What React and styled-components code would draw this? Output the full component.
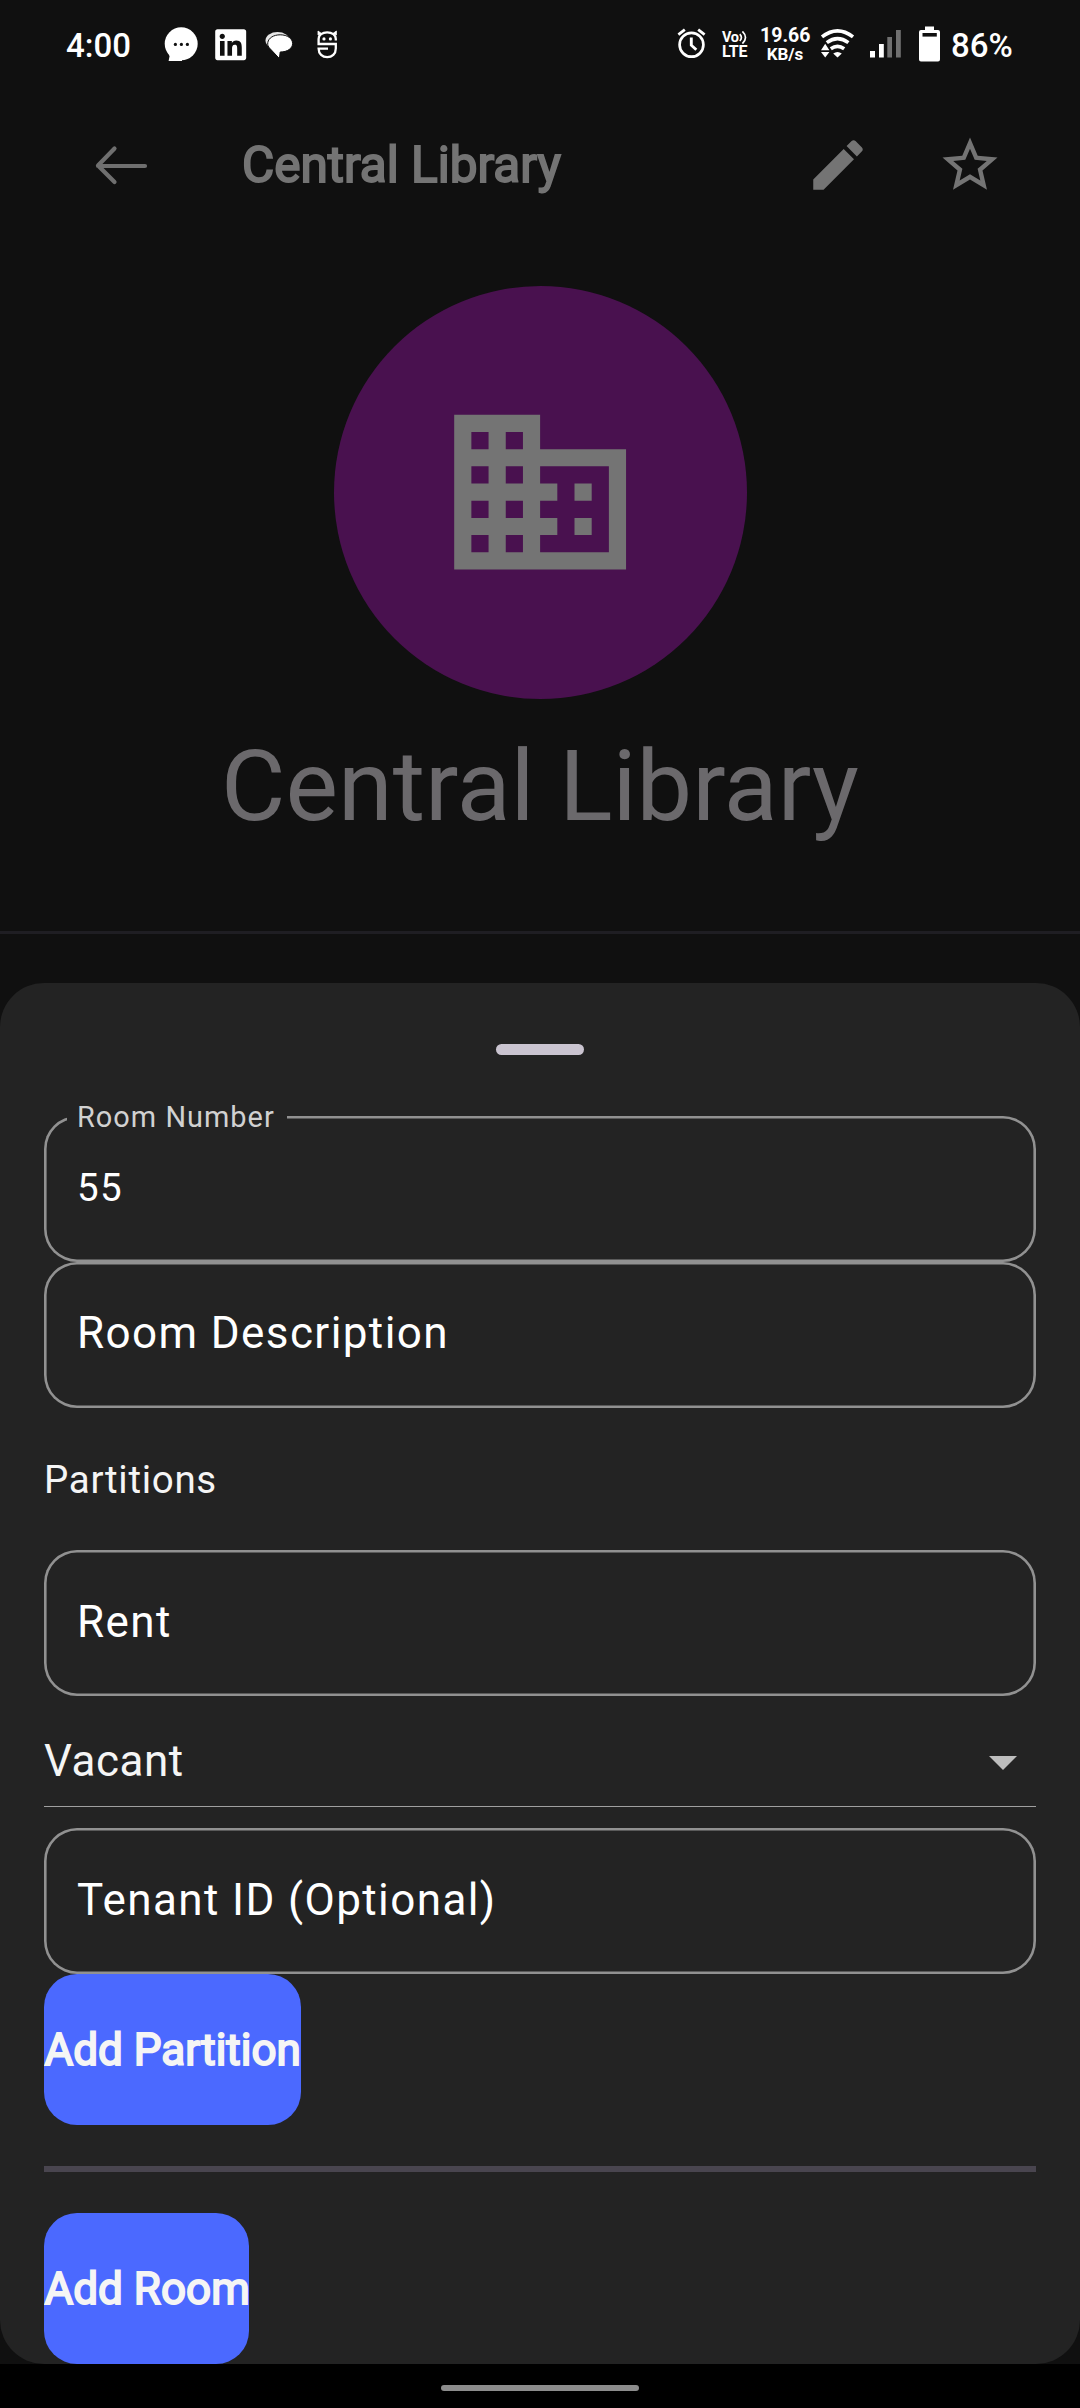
import React from "react";
import styled, { createGlobalStyle, css } from "styled-components";
import { FaLinkedin } from "react-icons/fa";

const GlobalStyle = createGlobalStyle`
  *, *::before, *::after { box-sizing: border-box; }
  html, body { margin: 0; padding: 0; background: #101010; }
  body { font-family: Roboto, "Noto Sans", sans-serif; }
`;

const Screen = styled.div`
  display: flex;
  flex-direction: column;
  width: 1080px;
  height: 2408px;
  background: #101010;
  overflow: hidden;
`;

/* Status bar */

const StatusBar = styled.div`
  display: flex;
  justify-content: space-between;
  align-items: flex-start;
  flex: none;
  height: 88px;
  padding: 26px 66px 0;
  color: #fff;
`;

const StatusGroup = styled.div`
  display: flex;
  align-items: flex-start;
`;

const StatusText = styled.span`
  font-size: 33px;
  font-weight: 500;
  line-height: 39px;
  white-space: nowrap;
  width: ${(p) => p.$width}px;
  margin-left: ${(p) => p.$gap || 0}px;
`;

const StatusIcon = styled.svg`
  display: block;
  flex: none;
  width: ${(p) => p.$width}px;
  height: 36px;
  margin-left: ${(p) => p.$gap || 0}px;
`;

const LinkedInIcon = styled(FaLinkedin)`
  display: block;
  width: 35.4px;
  height: 35.4px;
  margin: 0.6px 0 0 15px;
`;

const Stack = styled.div`
  display: flex;
  flex-direction: column;
  width: ${(p) => p.$width}px;
  margin-left: ${(p) => p.$gap}px;
`;

const VolteTop = styled.div`
  display: flex;
  height: 13px;
  padding-top: 5px;
  margin-bottom: 5px;
  font-size: 14.5px;
  font-weight: 700;
  line-height: 13px;
  letter-spacing: -0.3px;
`;

const VolteBottom = styled.div`
  font-size: 16px;
  font-weight: 700;
  line-height: 16px;
  letter-spacing: -0.2px;
`;

const Waves = styled.svg`
  width: 9px;
  height: 13px;
  flex: none;
`;

const Speed = styled.div`
  font-size: 19.5px;
  font-weight: 700;
  line-height: 20px;
  text-align: center;
  white-space: nowrap;
`;

const SpeedUnit = styled(Speed)`
  font-size: 17px;
  line-height: 17px;
`;

/* App bar */

const AppBar = styled.header`
  display: flex;
  align-items: center;
  flex: none;
  height: 154px;
  padding: 0 77px 0 94px;
  color: #747474;
`;

const BarIcon = styled.svg`
  display: block;
  flex: none;
  width: ${(p) => p.$size || 66}px;
  height: ${(p) => p.$size || 66}px;
  fill: currentColor;
`;

const emboldened = css`
  -webkit-text-stroke: 1.9px currentColor;
  white-space: nowrap;
`;

const BarTitle = styled.h1`
  flex: 1;
  margin: 0 0 0 88px;
  font-size: 49.5px;
  font-weight: 400;
  line-height: 60px;
  ${emboldened}
`;

const BarActions = styled.div`
  display: flex;
  gap: 66px;
`;

/* Building summary */

const Hero = styled.section`
  display: flex;
  flex-direction: column;
  align-items: center;
  flex: none;
  height: 692px;
  padding-top: 44px;
  border-bottom: 3px solid #1f1e23;
`;

const Avatar = styled.div`
  display: grid;
  place-items: center;
  width: 413px;
  height: 413px;
  border-radius: 50%;
  background: #49114f;
  color: #747474;
`;

const HeroName = styled.h2`
  margin: 27px 0 0;
  font-size: 99px;
  font-weight: 400;
  line-height: 121px;
  color: #6b696c;
  white-space: nowrap;
`;

/* Bottom sheet */

const Sheet = styled.section`
  display: flex;
  flex-direction: column;
  align-items: stretch;
  flex: none;
  height: 1381px;
  margin-top: 49px;
  padding: 61px 44px 0;
  border-radius: 44px;
  background: #232323;
  color: #f5f5f5;
`;

const Handle = styled.div`
  align-self: center;
  flex: none;
  width: 88px;
  height: 11px;
  margin-bottom: 61px;
  border-radius: 5.5px;
  background: #cac4d0;
`;

const Field = styled.div`
  position: relative;
  display: flex;
  align-items: center;
  flex: none;
  height: 146px;
  padding: 0 33px ${(p) => p.$lift || 3}px;
  border-radius: 33px;
  box-shadow: inset 0 0 0 2.6px #919191;
  font-size: ${(p) => (p.$filled ? 38.5 : 44)}px;
  letter-spacing: 1.4px;
  color: #fff;
  white-space: nowrap;
`;

const FloatingLabel = styled.span`
  position: absolute;
  top: -17px;
  left: 23px;
  width: 220px;
  padding-left: 10px;
  background: #232323;
  font-size: 28.9px;
  line-height: 36px;
  letter-spacing: 1.03px;
  color: #d1d1d1;
`;

const SectionLabel = styled.div`
  display: flex;
  align-items: center;
  flex: none;
  height: 142px;
  font-size: 38.5px;
  letter-spacing: 0.69px;
`;

const Select = styled.div`
  display: flex;
  align-items: center;
  justify-content: space-between;
  flex: none;
  height: 111px;
  margin-bottom: 21px;
  padding: 20px 19px 0 0;
  border-bottom: 1px solid #a0a0a0;
  font-size: 44px;
  letter-spacing: 0.5px;
`;

const Caret = styled.svg`
  width: 28px;
  height: 14px;
  margin-top: 4px;
  fill: #bdbdbd;
`;

const Button = styled.button`
  align-self: flex-start;
  flex: none;
  width: ${(p) => p.$width}px;
  height: 151px;
  padding: 0;
  border: 0;
  border-radius: 33px;
  background: #4b69ff;
  color: #f5f5f5;
  font-family: inherit;
  font-size: 44px;
  font-weight: 400;
  line-height: 60px;
  text-align: left;
  text-indent: 0.6px;
  overflow: hidden;
  ${emboldened}
`;

const Rule = styled.div`
  flex: none;
  height: 6px;
  margin: 41px 0;
  background: #49454f;
`;

/* System navigation */

const NavBar = styled.div`
  display: flex;
  justify-content: center;
  flex: none;
  height: 44px;
  padding-top: 21px;
  background: #000;
`;

const NavPill = styled.div`
  width: 198px;
  height: 6px;
  border-radius: 3px;
  background: #8c8c8c;
`;

const PENCIL =
  "M20.71,7.04C21.1,6.65 21.1,6 20.71,5.63L18.37,3.29C18,2.9 17.35,2.9 16.96,3.29L15.12,5.12L18.87,8.87M3,17.25V21H6.75L17.81,9.93L14.06,6.18L3,17.25Z";
const STAR =
  "M12,15.39L8.24,17.66L9.23,13.38L5.91,10.5L10.29,10.13L12,6.09L13.71,10.13L18.09,10.5L14.77,13.38L15.76,17.66M22,9.24L14.81,8.63L12,2L9.19,8.63L2,9.24L7.45,13.97L5.82,21L12,17.27L18.18,21L16.54,13.97L22,9.24Z";
const BUILDING =
  "M18,15H16V17H18M18,11H16V13H18M20,19H12V17H14V15H12V13H14V11H12V9H20M10,7H8V5H10M10,11H8V9H10M10,15H8V13H10M10,19H8V17H10M6,7H4V5H6M6,11H4V9H6M6,15H4V13H6M6,19H4V17H6M12,7V3H2V21H22V7H12Z";

function Status() {
  return (
    <StatusBar>
      <StatusGroup>
        <StatusText $width={98}>4:00</StatusText>
        <StatusIcon $width={34} viewBox="0 0 34 36" fill="#fff">
          <circle cx="17.2" cy="17.8" r="16.5" />
          <path d="M4.2 26 L5.6 30 L4.6 35 H18 V26Z" />
          <g fill="#101010">
            <circle cx="11.4" cy="18.4" r="1.6" />
            <circle cx="17.4" cy="18.4" r="1.6" />
            <circle cx="23.4" cy="18.4" r="1.6" />
          </g>
        </StatusIcon>
        <LinkedInIcon />
        <StatusIcon $width={30} $gap={15.6} viewBox="0 0 30 36">
          <ellipse cx="13.5" cy="14.4" rx="12" ry="8.4" fill="#e8e8e8" />
          <path
            d="M16.2 8.8 C23.5 8.8 28.6 12.6 28.6 17.5 C28.6 22.4 23.4 26 16.2 26 L15.4 32.6 L6 22.6 C4.2 20.8 3.4 19 3.8 16.6 C4.5 12 9.6 8.8 16.2 8.8Z"
            fill="#fff"
            stroke="#101010"
            strokeWidth="1"
          />
        </StatusIcon>
        <StatusIcon $width={24} $gap={21} viewBox="0 0 24 36" fill="none" stroke="#fff">
          <path
            d="M20.8 14.5 V13 C20.8 9 17 6.4 12.2 6.4 C7.4 6.4 3.6 9 3.6 13 V18 H20.8 V22.5 C20.8 28 17 31.2 12.2 31.2 C7.4 31.2 3.6 28 3.6 22.6 H13"
            strokeWidth="2.3"
          />
          <path d="M3 5 V9 L6.6 7.6Z M21.4 5 V9 L17.8 7.6Z" fill="#fff" strokeWidth="0.8" />
          <circle cx="9" cy="12.9" r="1.6" fill="#fff" stroke="none" />
          <circle cx="15.4" cy="12.9" r="1.6" fill="#fff" stroke="none" />
        </StatusIcon>
      </StatusGroup>

      <StatusGroup>
        <StatusIcon $width={31} viewBox="0 0 31 36" fill="none" stroke="#fff">
          <circle cx="15.5" cy="18.8" r="11.9" strokeWidth="2.7" />
          <path d="M2.4 8.6 L8.8 3.6 M22.2 3.6 L28.6 8.6" strokeWidth="2.8" />
          <path d="M15.3 11.4 V19.2 L20.3 23.8" strokeWidth="2.9" />
        </StatusIcon>
        <Stack $width={28} $gap={15}>
          <VolteTop>
            <span>Vo</span>
            <Waves viewBox="0 0 9 13" fill="none" stroke="#fff" strokeWidth="1.7">
              <path d="M0.8 3.2 Q4 6.6 0.8 10" />
              <path d="M3.4 0.4 Q9.6 6.4 3.4 12.6" />
            </Waves>
          </VolteTop>
          <VolteBottom>LTE</VolteBottom>
        </Stack>
        <Stack $width={50} $gap={10}>
          <Speed>19.66</Speed>
          <SpeedUnit>KB/s</SpeedUnit>
        </Stack>
        <StatusIcon $width={35} $gap={10} viewBox="0 0 35 36" fill="none" stroke="#fff">
          <path d="M2 10.8 Q17.5 -1.2 33 10.8" strokeWidth="3.6" />
          <path d="M6.8 16.6 Q17.5 8.6 28.4 16.6" strokeWidth="3.6" />
          <path d="M10.8 22.8 Q17.5 18 24.2 22.8" strokeWidth="3.6" />
          <path d="M13.2 27.6 Q17.5 24.4 21.8 27.6 L17.5 31.6Z" fill="#fff" stroke="none" />
          <path d="M5.2 17.8 L9.4 24.2 H1Z M5.2 31.6 L9.4 26 H1Z" fill="#fff" stroke="none" />
        </StatusIcon>
        <StatusIcon $width={32} $gap={15} viewBox="0 0 32 36">
          <path d="M0 25 H5 V31.4 H0Z M9 18 H13.8 V31.4 H9Z" fill="#fff" />
          <path d="M17.3 11 H22 V31.4 H17.3Z M26 4 H30.8 V31.4 H26Z" fill="#707070" />
        </StatusIcon>
        <StatusIcon $width={21} $gap={17} viewBox="0 0 21 36">
          <path
            d="M6 0.4 H15 V4 H19 Q21 4 21 6 V33.6 Q21 35.6 19 35.6 H2 Q0 35.6 0 33.6 V6 Q0 4 2 4 H6Z"
            fill="#fff"
          />
          <path d="M3.5 7 H17.8 V10.6 H3.5Z" fill="#101010" />
        </StatusIcon>
        <StatusText $width={63} $gap={11}>86%</StatusText>
      </StatusGroup>
    </StatusBar>
  );
}

export default function App() {
  return (
    <Screen>
      <GlobalStyle />
      <Status />
      <AppBar>
        <BarIcon $size={60} viewBox="0 0 60 60">
          <path
            d="M20.5 13.5 L4 30.5 L20.5 47 M4 31 H51"
            fill="none"
            stroke="#6f6f6f"
            strokeWidth="4.2"
            strokeLinecap="round"
            strokeLinejoin="round"
          />
        </BarIcon>
        <BarTitle>Central Library</BarTitle>
        <BarActions>
          <BarIcon viewBox="0 0 24 24">
            <path d={PENCIL} />
          </BarIcon>
          <BarIcon viewBox="0 0 24 24">
            <path d={STAR} />
          </BarIcon>
        </BarActions>
      </AppBar>

      <Hero>
        <Avatar>
          <BarIcon $size={206.25} viewBox="0 0 24 24">
            <path d={BUILDING} />
          </BarIcon>
        </Avatar>
        <HeroName>Central Library</HeroName>
      </Hero>

      <Sheet>
        <Handle />
        <Field $filled>
          <FloatingLabel>Room Number</FloatingLabel>
          55
        </Field>
        <Field $lift={4}>Room Description</Field>
        <SectionLabel>Partitions</SectionLabel>
        <Field>Rent</Field>
        <Select>
          Vacant
          <Caret viewBox="0 0 28 14">
            <path d="M0 0 H28 L14 14Z" />
          </Caret>
        </Select>
        <Field>Tenant ID (Optional)</Field>
        <Button $width={257}>Add Partition</Button>
        <Rule />
        <Button $width={205}>Add Room</Button>
      </Sheet>

      <NavBar>
        <NavPill />
      </NavBar>
    </Screen>
  );
}
